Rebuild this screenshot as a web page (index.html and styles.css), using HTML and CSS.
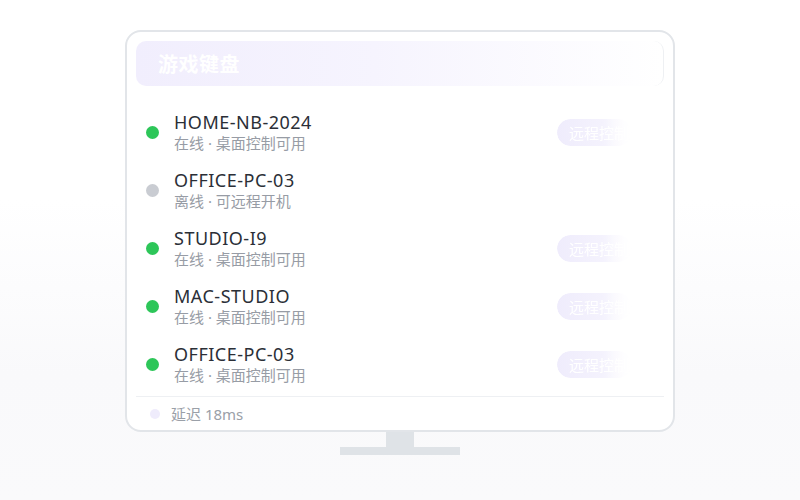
FILE: index.html
```html
<!DOCTYPE html>
<html lang="zh-CN">
<head>
    <meta charset="UTF-8">
    <meta name="viewport" content="width=device-width, initial-scale=1.0">
    <title>游戏键盘</title>
    <link rel="stylesheet" href="styles.css">
</head>
<body>

    <div class="monitor">
        <div class="screen">
            <div class="header">
                <h1>游戏键盘</h1>
            </div>

            <ul class="devices">
                <li class="device">
                    <span class="dot online"></span>
                    <div class="info">
                        <div class="name">HOME-NB-2024</div>
                        <div class="status">在线 · 桌面控制可用</div>
                    </div>
                    <button class="remote">远程控制</button>
                </li>
                <li class="device">
                    <span class="dot offline"></span>
                    <div class="info">
                        <div class="name">OFFICE-PC-03</div>
                        <div class="status">离线 · 可远程开机</div>
                    </div>
                </li>
                <li class="device">
                    <span class="dot online"></span>
                    <div class="info">
                        <div class="name">STUDIO-I9</div>
                        <div class="status">在线 · 桌面控制可用</div>
                    </div>
                    <button class="remote">远程控制</button>
                </li>
                <li class="device">
                    <span class="dot online"></span>
                    <div class="info">
                        <div class="name">MAC-STUDIO</div>
                        <div class="status">在线 · 桌面控制可用</div>
                    </div>
                    <button class="remote">远程控制</button>
                </li>
                <li class="device">
                    <span class="dot online"></span>
                    <div class="info">
                        <div class="name">OFFICE-PC-03</div>
                        <div class="status">在线 · 桌面控制可用</div>
                    </div>
                    <button class="remote">远程控制</button>
                </li>
            </ul>

            <div class="footer">
                <span class="dot latency"></span>
                <span>延迟 18ms</span>
            </div>
        </div>
    </div>

    <!-- stand -->
    <div class="neck"></div>
    <div class="base"></div>

</body>
</html>
```

FILE: styles.css
```css
body {
    margin: 0;
    width: 800px;
    height: 500px;
    font-family: 'Noto Sans', 'Noto Sans CJK SC', sans-serif;
    background: linear-gradient(180deg, #ffffff 0%, #ffffff 40%, #f9f9fb 75%, #fafafb 100%);
    display: flex;
    flex-direction: column;
    align-items: center;
    overflow: hidden;
}

.monitor {
    margin-top: 30px;
    width: 550px;
    height: 402px;
    box-sizing: border-box;
    border: 2px solid #e2e5e9;
    border-radius: 16px;
    background: #fff;
    padding: 9px 9px 0;
}

.screen {
    display: flex;
    flex-direction: column;
}

.header {
    height: 45px;
    box-sizing: border-box;
    border-radius: 10px;
    border-right: 1px solid #eef0f3;
    background: linear-gradient(90deg, #f1eefd 0%, #f6f4fe 45%, #ffffff 100%);
    display: flex;
    align-items: center;
    padding-left: 22px;
    width: 528px;
}

.header h1 {
    margin: 0;
    font-size: 20px;
    font-weight: 700;
    color: #fff;
    letter-spacing: 0.5px;
}

.devices {
    list-style: none;
    margin: 17px 0 0;
    padding: 0;
}

.device {
    height: 58px;
    display: flex;
    align-items: center;
    padding: 0 32px 0 10px;
}

.dot {
    width: 13px;
    height: 13px;
    border-radius: 50%;
    flex-shrink: 0;
}

.dot.online {
    background: #2dc659;
}

.dot.offline {
    background: #c9ccd2;
}

.info {
    margin-left: 15px;
    display: flex;
    flex-direction: column;
}

.name {
    font-size: 18px;
    line-height: 22px;
    color: #2b2f37;
    letter-spacing: 0.5px;
}

.status {
    font-size: 15px;
    line-height: 20px;
    color: #979ca5;
}

.remote {
    margin-left: auto;
    width: 75px;
    height: 27px;
    border: none;
    border-radius: 14px;
    padding: 0 0 0 12px;
    text-align: left;
    white-space: nowrap;
    overflow: hidden;
    font-family: 'Noto Sans CJK SC', sans-serif;
    font-size: 15px;
    color: #fff;
    background: linear-gradient(90deg, #efecfc 0%, #f4f2fd 60%, #ffffff 100%);
    -webkit-mask-image: linear-gradient(90deg, #000 65%, rgba(0, 0, 0, 0.2) 100%);
    cursor: pointer;
}

.footer {
    margin-top: 3px;
    border-top: 1px solid #eef0f3;
    height: 33px;
    display: flex;
    align-items: center;
    padding-left: 14px;
    font-size: 15px;
    color: #9aa0a8;
}

.dot.latency {
    width: 10px;
    height: 10px;
    background: #efecfc;
    margin-right: 11px;
}

.neck {
    width: 28px;
    height: 15px;
    background: #dfe3e7;
}

.base {
    width: 120px;
    height: 8px;
    background: #dfe3e7;
}
```
